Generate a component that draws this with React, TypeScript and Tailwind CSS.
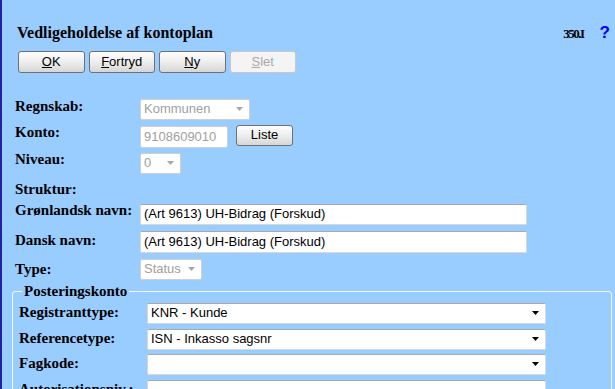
import React from "react";

const serif = "font-['Liberation_Serif',serif] font-bold text-[15px] leading-[12px] text-black";
const sans = "font-['Liberation_Sans',Arial,sans-serif] text-[13px]";

function Arrow({ disabled }: { disabled?: boolean }) {
  return (
    <svg width="7" height="4" viewBox="0 0 7 4" className="shrink-0">
      <polygon points="0,0 7,0 3.5,4" fill={disabled ? "#a8a8a8" : "#000"} />
    </svg>
  );
}

function Select({ w, text, disabled }: { w: string; text: string; disabled?: boolean }) {
  return (
    <div
      className={
        "flex items-center h-[21px] bg-white pl-[3px] pr-[6px] border rounded-[2px] " +
        (disabled ? "border-[#cfcfcf] text-[#a0a0a0] " : "border-[#d8d8d8] border-t-[#a8a8a8] text-black ") +
        w
      }
    >
      <span className={"flex-1 whitespace-nowrap overflow-hidden " + sans}>{text}</span>
      <Arrow disabled={disabled} />
    </div>
  );
}

function Input({ w, text, disabled, h }: { w: string; text: string; disabled?: boolean; h: string }) {
  return (
    <div
      className={
        "flex items-center bg-white pl-[3px] border rounded-[2px] " +
        (disabled ? "border-[#cfcfcf] text-[#a0a0a0] " : "border-[#d8d8d8] border-t-[#a8a8a8] text-black ") +
        w +
        " " +
        h
      }
    >
      <span className={"whitespace-nowrap " + sans}>{text}</span>
    </div>
  );
}

function Btn({ children, disabled, w, h }: { children: React.ReactNode; disabled?: boolean; w: string; h: string }) {
  return (
    <div
      className={
        "flex items-center justify-center rounded-[3px] border " +
        sans +
        " " +
        w +
        " " +
        h +
        " " +
        (disabled
          ? "border-[#c8c8c8] bg-[#f4f4f4] text-[#a8a8a8]"
          : "border-[#707070] bg-gradient-to-b from-[#fdfdfd] via-[#eeeeee] to-[#d6d6d6] text-black")
      }
    >
      {children}
    </div>
  );
}

export default function App() {
  return (
    <div className="min-h-screen bg-[#99ccff] flex">
      <div className="w-[2px] bg-[#2222a0] shrink-0" />
      <div className="flex-1 pl-[13px] pr-[8px] pt-[24px]">
        {/* header */}
        <div className="flex items-baseline justify-between">
          <div className="ml-[2px] font-['Liberation_Serif',serif] font-bold text-[16px] leading-[18px] text-black">
            Vedligeholdelse af kontoplan
          </div>
          <div className="flex items-baseline">
            <span className="font-['Liberation_Serif',serif] font-bold text-[13px] tracking-[-1.5px] text-black">350.I</span>
            <span className="ml-[16px] mr-[2px] font-['Liberation_Sans',Arial,sans-serif] font-bold text-[17px] leading-[18px] text-[#0000ff]">?</span>
          </div>
        </div>

        {/* buttons */}
        <div className="mt-[7px] ml-[3px] flex gap-[4px]">
          <Btn w="w-[66.5px]" h="h-[22px]">
            <span className="underline">O</span>K
          </Btn>
          <Btn w="w-[66.5px]" h="h-[22px]">
            <span className="underline">F</span>ortryd
          </Btn>
          <Btn w="w-[66.5px]" h="h-[22px]">
            <span className="underline">N</span>y
          </Btn>
          <Btn w="w-[66.5px]" h="h-[22px]" disabled>
            <span className="underline">S</span>let
          </Btn>
        </div>

        {/* form */}
        <div className="mt-[26px] flex flex-col">
          <div className="flex h-[27px] items-start">
            <div className={"w-[125px] mt-[1px] " + serif}>Regnskab:</div>
            <Select w="w-[110px]" text="Kommunen" disabled />
          </div>
          <div className="flex h-[27px] items-start">
            <div className={"w-[125px] mt-[0px] " + serif}>Konto:</div>
            <Input w="w-[88px]" h="h-[22px]" text="9108609010" disabled />
            <div className="ml-[8px] -mt-[1px]">
              <Btn w="w-[57px]" h="h-[21px]">Liste</Btn>
            </div>
          </div>
          <div className="flex h-[27px] items-start">
            <div className={"w-[125px] mt-[0px] " + serif}>Niveau:</div>
            <Select w="w-[41px]" text="0" disabled />
          </div>
          <div className="flex h-[24px] items-start">
            <div className={"w-[125px] mt-[3px] " + serif}>Struktur:</div>
          </div>
          <div className="flex h-[27px] items-start">
            <div className={"w-[125px] mt-[0px] " + serif}>Grønlandsk navn:</div>
            <Input w="w-[387px]" h="h-[21px]" text="(Art 9613) UH-Bidrag (Forskud)" />
          </div>
          <div className="flex h-[28px] items-start">
            <div className={"w-[125px] mt-[3px] " + serif}>Dansk navn:</div>
            <Input w="w-[387px]" h="h-[22px]" text="(Art 9613) UH-Bidrag (Forskud)" />
          </div>
          <div className="flex h-[21px] items-start">
            <div className={"w-[125px] mt-[4px] " + serif}>Type:</div>
            <Select w="w-[62px]" text="Status" disabled />
          </div>
        </div>

        {/* fieldset */}
        <fieldset className="mt-[3px] -ml-[3px] w-[600px] border border-[#f4faff] rounded-[3px] pl-[6px] pb-[6px]">
          <legend className={"ml-[3px] px-[2px] font-['Liberation_Serif',serif] font-bold text-[15px] leading-[17px] text-black"}>
            Posteringskonto
          </legend>
          <div className="mt-[3px] flex flex-col">
            <div className="flex h-[26px] items-start">
              <div className={"w-[128px] mt-[3px] " + serif}>Registranttype:</div>
              <Select w="w-[399px]" text="KNR - Kunde" />
            </div>
            <div className="flex h-[25px] items-start">
              <div className={"w-[128px] mt-[3px] " + serif}>Referencetype:</div>
              <Select w="w-[399px]" text="ISN - Inkasso sagsnr" />
            </div>
            <div className="flex h-[26px] items-start">
              <div className={"w-[128px] mt-[3px] " + serif}>Fagkode:</div>
              <Select w="w-[399px]" text="" />
            </div>
            <div className="flex h-[26px] items-start">
              <div className={"w-[128px] mt-[3px] " + serif}>Autorisationsniv.:</div>
              <Input w="w-[399px]" h="h-[21px]" text="" />
            </div>
          </div>
        </fieldset>
      </div>
    </div>
  );
}
